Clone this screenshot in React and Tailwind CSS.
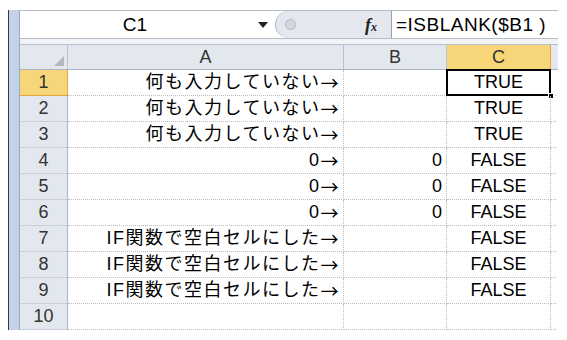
const rows = [
  { a: '何も入力していない', b: '', c: 'TRUE' },
  { a: '何も入力していない', b: '', c: 'TRUE' },
  { a: '何も入力していない', b: '', c: 'TRUE' },
  { a: '0', b: '0', c: 'FALSE' },
  { a: '0', b: '0', c: 'FALSE' },
  { a: '0', b: '0', c: 'FALSE' },
  { a: 'IF関数で空白セルにした', b: '', c: 'FALSE' },
  { a: 'IF関数で空白セルにした', b: '', c: 'FALSE' },
  { a: 'IF関数で空白セルにした', b: '', c: 'FALSE' },
  { a: '', b: '', c: '' },
]

export default function App() {
  return (
    <div className="w-[567px] h-[340px] bg-white overflow-hidden text-black font-['Liberation_Sans','Noto_Sans_CJK_JP',sans-serif]">
      <div className="flex pt-[10px] pl-[8px]">
        {/* left window edge */}
        <div className="w-[12px] h-[320px] border-l border-[#3a3a3a] border-r border-r-[#9aa8bc] bg-[#c3d1e9]" />

        <div className="w-[538px] flex flex-col">
          {/* formula bar */}
          <div className="h-[28px] flex border-t border-[#b4bcc8]">
            <div className="w-[230px] flex items-center justify-center text-[19px] leading-none">C1</div>
            <div className="w-[25px] flex items-center justify-center">
              <div className="w-0 h-0 border-l-[5px] border-r-[5px] border-t-[6px] border-l-transparent border-r-transparent border-t-[#222]" />
            </div>
            <div className="w-[117px] flex items-center bg-[#e4e7ee] rounded-l-[14px] border-l border-[#b0b6c2] border-r border-r-[#9aa2b0]">
              <div className="ml-[9px] w-[11px] h-[11px] rounded-full bg-[#d4d7de] border border-[#b4b8c2]" />
              <div className="ml-auto mr-[14px] flex items-baseline font-['Liberation_Serif',serif] italic font-bold text-[#222]">
                <span className="text-[18px] leading-none">f</span>
                <span className="text-[12px] leading-none">x</span>
              </div>
            </div>
            <div className="flex-1 flex items-center pl-[4px] text-[19px] tracking-[0.5px] leading-none">=ISBLANK($B1 )</div>
          </div>

          {/* separator */}
          <div className="h-[7px] border-t border-b border-[#b8bec8] bg-[#f2f3f6]" />

          {/* column headers */}
          <div className="h-[25px] flex text-[18px] text-[#333] border-b border-[#a9b5c6]">
            <div className="w-[48px] relative bg-[#e3e7ee] border-r border-[#b8c2d0]">
              <div className="absolute right-[3px] bottom-[3px] w-[10px] h-[10px] bg-[#b4b8c0] [clip-path:polygon(100%_0,100%_100%,0_100%)]" />
            </div>
            <div className="w-[276px] flex items-center justify-center bg-[#e3e7ee] border-r border-[#b8c2d0]">A</div>
            <div className="w-[103px] flex items-center justify-center bg-[#e3e7ee] border-r border-[#b8c2d0]">B</div>
            <div className="w-[104px] flex items-center justify-center bg-[#f7d67a] border-r border-[#e8a33c]">C</div>
            <div className="flex-1 bg-[#e3e7ee]" />
          </div>

          {/* rows */}
          {rows.map((r, i) => (
            <div key={i} className="h-[26px] flex">
              <div
                className={
                  i === 0
                    ? 'w-[48px] flex items-center justify-center text-[18px] text-[#333] bg-[#f7d67a] border-r border-[#e8a33c] border-b border-b-[#e8a33c]'
                    : 'w-[48px] flex items-center justify-center text-[18px] text-[#333] bg-[#e3e7ee] border-r border-[#a9b5c6] border-b border-b-[#c8cfd9]'
                }
              >
                {i + 1}
              </div>
              <div className="w-[276px] flex items-center justify-end pr-[3px] text-[18px] tracking-[1.5px] border-r border-b border-dotted border-[#bdbdbd] whitespace-nowrap">
                {r.a && (
                  <>
                    {r.a}
                    <span className="font-['Noto_Sans_CJK_JP',sans-serif]">→</span>
                  </>
                )}
              </div>
              <div className="w-[103px] flex items-center justify-end pr-[4px] text-[18px] border-r border-b border-dotted border-[#bdbdbd]">
                {r.b}
              </div>
              <div className="w-[104px] relative flex items-center justify-center text-[18px] border-r border-b border-dotted border-[#bdbdbd]">
                {r.c}
                {i === 0 && (
                  <>
                    <div className="absolute -left-[1px] -top-[1px] -right-[1px] -bottom-[1px] border-[2px] border-black" />
                    <div className="absolute -right-[4px] -bottom-[4px] w-[6px] h-[6px] bg-black border border-white" />
                  </>
                )}
              </div>
              <div className="w-[5px] border-b border-dotted border-[#bdbdbd]" />
            </div>
          ))}
        </div>
      </div>
    </div>
  )
}
